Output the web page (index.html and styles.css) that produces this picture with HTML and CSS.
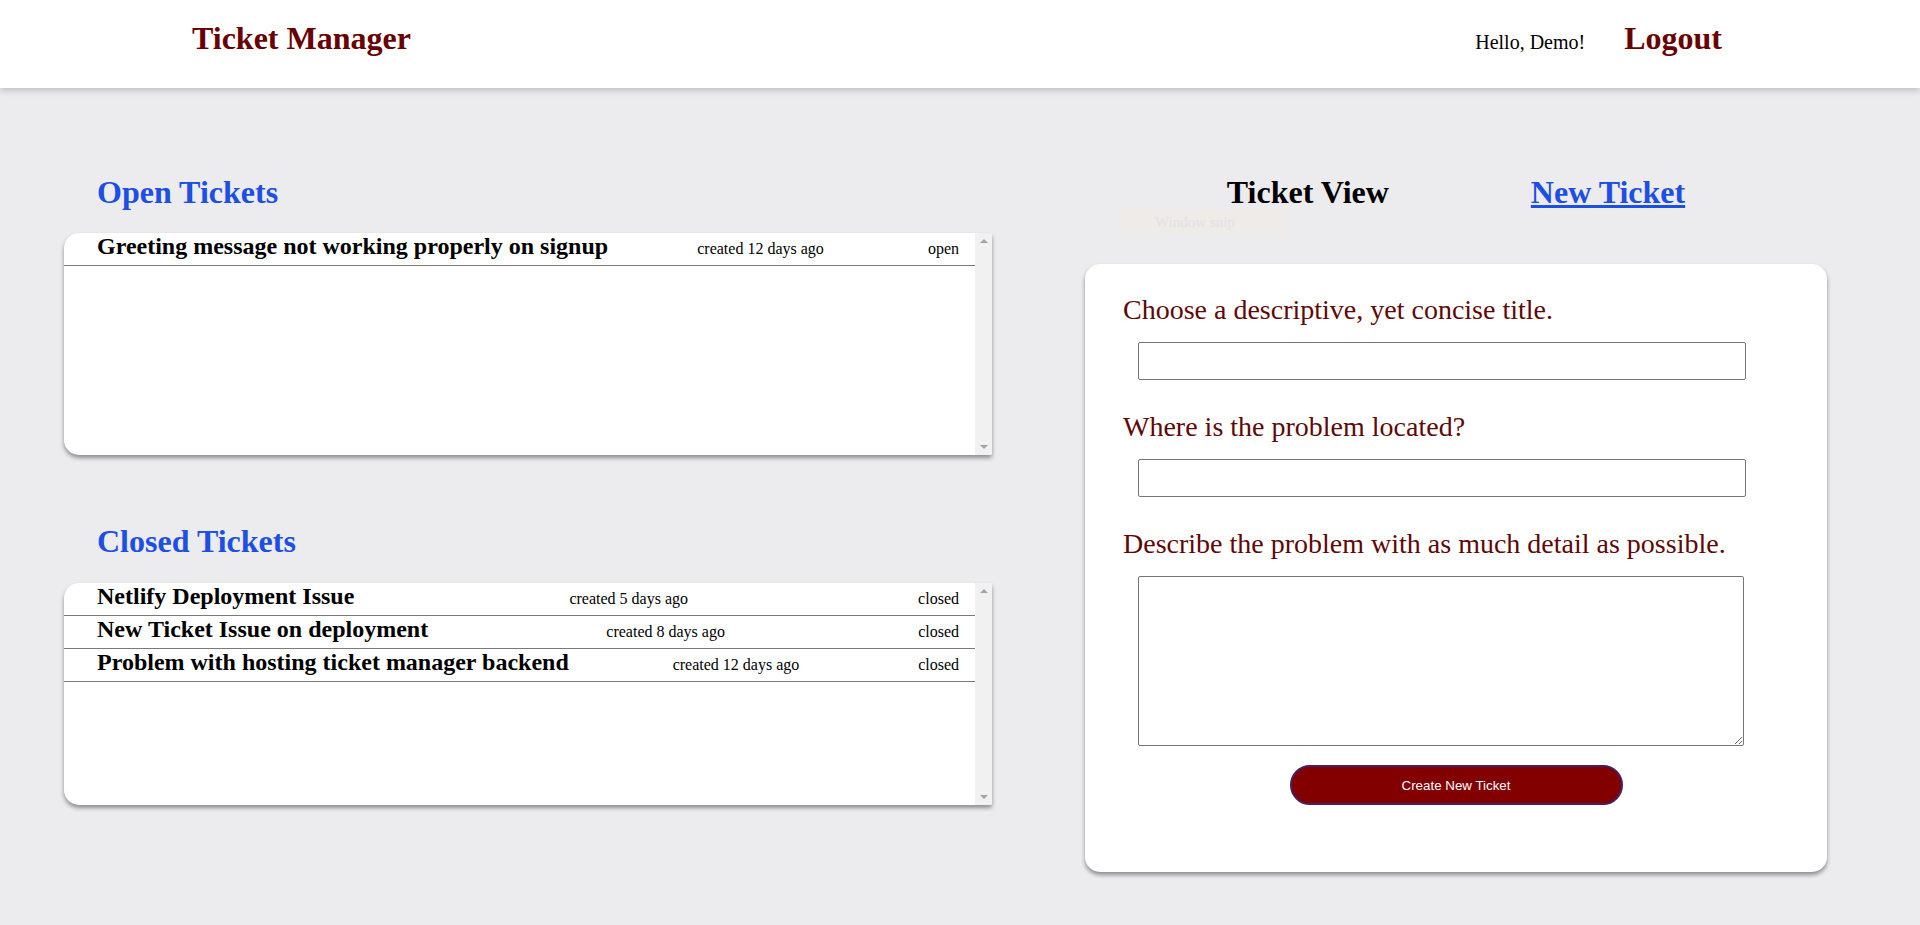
FILE: index.html
```html
<!DOCTYPE html>
<html lang="en">
<head>
<meta charset="utf-8">
<title>Ticket Manager</title>
<link rel="stylesheet" href="styles.css">
</head>
<body>
<header class="topbar">
  <h1 class="brand">Ticket Manager</h1>
  <div class="user">
    <span class="greeting">Hello, Demo!</span>
    <a class="logout" href="#">Logout</a>
  </div>
</header>
<main class="page">
  <section class="lists">
    <h2 class="section-title">Open Tickets</h2>
    <div class="ticket-box">
      <div class="ticket-list">
        <div class="ticket-row">
          <h3 class="ticket-title">Greeting message not working properly on signup</h3>
          <span class="ticket-date">created 12 days ago</span>
          <span class="ticket-status">open</span>
        </div>
      </div>
      <div class="scrollbar">
        <span class="arrow arrow-up"></span>
        <span class="arrow arrow-down"></span>
      </div>
    </div>
    <h2 class="section-title closed-title">Closed Tickets</h2>
    <div class="ticket-box">
      <div class="ticket-list">
        <div class="ticket-row">
          <h3 class="ticket-title">Netlify Deployment Issue</h3>
          <span class="ticket-date">created 5 days ago</span>
          <span class="ticket-status">closed</span>
        </div>
        <div class="ticket-row">
          <h3 class="ticket-title">New Ticket Issue on deployment</h3>
          <span class="ticket-date">created 8 days ago</span>
          <span class="ticket-status">closed</span>
        </div>
        <div class="ticket-row">
          <h3 class="ticket-title">Problem with hosting ticket manager backend</h3>
          <span class="ticket-date">created 12 days ago</span>
          <span class="ticket-status">closed</span>
        </div>
      </div>
      <div class="scrollbar">
        <span class="arrow arrow-up"></span>
        <span class="arrow arrow-down"></span>
      </div>
    </div>
  </section>
  <section class="editor">
    <nav class="tabs">
      <span class="tab tab-active">Ticket View</span>
      <a class="tab tab-link" href="#">New Ticket</a>
    </nav>
    <div class="ghost">Window snip</div>
    <form class="card">
      <label class="field-label">Choose a descriptive, yet concise title.</label>
      <input class="field-input" type="text">
      <label class="field-label">Where is the problem located?</label>
      <input class="field-input" type="text">
      <label class="field-label">Describe the problem with as much detail as possible.</label>
      <textarea class="field-area"></textarea>
      <button class="submit" type="button">Create New Ticket</button>
    </form>
  </section>
</main>
</body>
</html>
```

FILE: styles.css
```css
html, body {
  margin: 0;
  padding: 0;
}

body {
  background: #ecebee;
  font-family: "Liberation Serif", "Times New Roman", serif;
  color: #000;
  min-height: 925px;
}

/* Header */
.topbar {
  box-sizing: border-box;
  height: 88px;
  background: #ffffff;
  display: flex;
  justify-content: space-between;
  align-items: baseline;
  padding: 20px 198px 0 192px;
  box-shadow: 0 2px 7px rgba(0, 0, 0, 0.22);
  position: relative;
  z-index: 1;
}

.brand {
  margin: 0;
  font-size: 32px;
  line-height: 36px;
  font-weight: bold;
  color: #680000;
}

.user {
  display: flex;
  align-items: baseline;
  gap: 39px;
}

.greeting {
  font-size: 20px;
  color: #000;
}

.logout {
  font-size: 32px;
  line-height: 36px;
  font-weight: bold;
  color: #680000;
  text-decoration: none;
}

/* Page layout */
.page {
  display: grid;
  grid-template-columns: 928px 742px;
  column-gap: 93px;
  padding: 86px 93px 0 64px;
}

.section-title {
  margin: 0 0 23px 33px;
  font-size: 32px;
  line-height: 36px;
  font-weight: bold;
  color: #1d4fe2;
}

.closed-title {
  margin-top: 68px;
  margin-bottom: 24px;
}

.ticket-box {
  height: 222px;
  display: flex;
  background: #ffffff;
  border-radius: 15px 2px 2px 15px;
  overflow: hidden;
  box-shadow: 0 3px 4px rgba(0, 0, 0, 0.4);
}

.ticket-list {
  flex: 1;
}

.scrollbar {
  width: 17px;
  background: #f1f1f1;
  display: flex;
  flex-direction: column;
  justify-content: space-between;
  align-items: center;
  padding: 6px 0;
}

.arrow {
  width: 0;
  height: 0;
  border-left: 4px solid transparent;
  border-right: 4px solid transparent;
}

.arrow-up {
  border-bottom: 4px solid #a3a3a3;
}

.arrow-down {
  border-top: 4px solid #a3a3a3;
}

.ticket-row {
  display: flex;
  justify-content: space-between;
  align-items: baseline;
  padding: 0 16px 5px 33px;
  border-bottom: 1px solid #7a7a7a;
}

.ticket-title {
  margin: 0;
  font-size: 24px;
  line-height: 27px;
  font-weight: bold;
}

.ticket-date {
  font-size: 16px;
  margin-right: 15px;
}

.ticket-status {
  font-size: 16px;
}

/* Right column */
.editor {
  position: relative;
}

.tabs {
  display: flex;
  justify-content: center;
  gap: 142px;
}

.tab {
  font-size: 32px;
  line-height: 36px;
  font-weight: bold;
}

.tab-active {
  color: #000;
}

.tab-link {
  color: #1d4fe2;
  text-decoration: underline;
}

.ghost {
  position: absolute;
  left: 35px;
  top: 36px;
  width: 165px;
  height: 25px;
  background: #eeebe9;
  color: #e4e2e5;
  font-size: 15px;
  line-height: 25px;
  text-indent: 35px;
}

.card {
  margin-top: 54px;
  box-sizing: border-box;
  height: 608px;
  background: #ffffff;
  border-radius: 15px;
  box-shadow: 0 3px 4px rgba(0, 0, 0, 0.4);
  padding: 29px 0 0 38px;
  display: flex;
  flex-direction: column;
  align-items: flex-start;
}

.field-label {
  font-size: 28px;
  line-height: 34px;
  color: #5e0808;
}

.field-input {
  box-sizing: border-box;
  width: 608px;
  height: 38px;
  margin: 15px 0 30px 15px;
  border: 1px solid #767676;
  border-radius: 2px;
  background: #fff;
}

.field-area {
  box-sizing: border-box;
  width: 606px;
  height: 170px;
  margin: 15px 0 19px 15px;
  border: 1px solid #767676;
  border-radius: 2px;
  background: #fff;
}

.submit {
  align-self: center;
  margin-left: -38px;
  width: 333px;
  height: 40px;
  background: #820000;
  color: #ffffff;
  border: 2px solid #4a1d5c;
  border-radius: 20px;
  font-family: "Liberation Sans", Arial, sans-serif;
  font-size: 13.333px;
}
```
